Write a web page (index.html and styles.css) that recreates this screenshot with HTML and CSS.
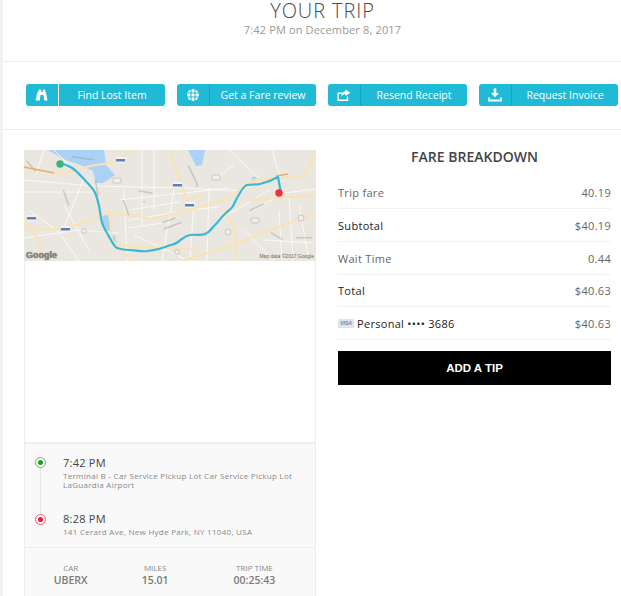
FILE: index.html
```html
<!DOCTYPE html>
<html lang="en">
<head>
<meta charset="utf-8">
<title>Your Trip</title>
<link rel="stylesheet" href="styles.css">
</head>
<body>
<div class="page">
  <header class="head">
    <h1 class="title">YOUR TRIP</h1>
    <p class="when">7:42 PM on December 8, 2017</p>
  </header>
  <nav class="actions">
    <a class="btn">
      <span class="btn-icon btn-icon-light"><svg width="14" height="14" viewBox="0 0 14 14"><path fill="#fff" d="M4 1.500h2l.4 2.500h1.200l.4-2.500h2l1.200 4.500 1.300 6.500H9.200l-.7-5.500h-3l-.7 5.500H.7L2 6z"/></svg></span>
      <span class="btn-label">Find Lost Item</span>
    </a>
    <a class="btn">
      <span class="btn-icon"><svg width="14" height="14" viewBox="0 0 14 14"><circle cx="7" cy="7" r="6" fill="#fff"/><path d="M0.500 5h13M0.500 9h13M5 0.500v13M9 0.500v13" stroke="#1fbad6" stroke-width="1.100"/></svg></span>
      <span class="btn-label">Get a Fare review</span>
    </a>
    <a class="btn">
      <span class="btn-icon"><svg width="14" height="14" viewBox="0 0 14 14"><path fill="none" stroke="#fff" stroke-width="1.500" d="M10.500 8.500v3.700H1.200V5.200h4"/><path fill="#fff" d="M8.500 1.500l5 3.200-5 3.300V6C6.500 6 5 7 4.200 9 4.200 5.800 6 3.500 8.500 3.300z"/></svg></span>
      <span class="btn-label">Resend Receipt</span>
    </a>
    <a class="btn">
      <span class="btn-icon"><svg width="14" height="14" viewBox="0 0 14 14"><path fill="#fff" d="M5.700 0.500h2.600v4.500h2.700L7 9.200 3 5h2.700z"/><path fill="none" stroke="#fff" stroke-width="1.800" d="M1 9.500v3h12v-3"/></svg></span>
      <span class="btn-label">Request Invoice</span>
    </a>
  </nav>
  <main class="content">
    <section class="card">
      <div class="map">
        <svg class="map-svg" width="292" height="111" viewBox="0 0 292 111">
          <defs>
            <filter id="soft" x="-5%" y="-5%" width="110%" height="110%"><feGaussianBlur stdDeviation="0.700"/></filter>
            <filter id="route" x="-5%" y="-5%" width="110%" height="110%"><feGaussianBlur stdDeviation="0.350"/></filter>
          </defs>
          <g filter="url(#soft)">
            <rect x="-5" y="-5" width="302" height="121" fill="#e9e7df"/>
            <g fill="#aad2f6">
              <path d="M24 0h56l2 15 9 10-12 8h-7l-3-12-15-7-10-3-8-4z"/>
              <path d="M164 0h17l-3 15-6 1z"/>
              <path d="M78 65l5-1 3 8 1 9-4-1-4-8z"/>
              <path d="M87 85l4 1 2 9-3 1z"/>
              <circle cx="230" cy="29" r="2.500"/><circle cx="120" cy="52" r="1"/><circle cx="173" cy="36" r="1"/>
            </g>
            <g fill="none" stroke="#fff" stroke-opacity="0.800" stroke-width="0.900">
              <path d="M0 30l70 6 90 2 60 3M0 42h70M5 60l30 22 20 29M30 0l14 14M60 28l-20 50M118 0v75M130 0v60M100 40l3 71M150 40l-12 71M185 38l-2 73M0 88l55-8 40 3M105 70l60-10 30-3M195 70l50-30M230 60l30-17 32-4M255 60l3 51M265 45l4 66M205 0l30 28M248 0l8 27M95 50l110-12M110 85l55 26M220 80l30 31M275 55l10 56M40 55l25 45M105 60l50-8M105 78l40-6M20 0l-8 25M170 50l-4 61M210 15l-20 15M240 90l50 3"/>
            </g>
            <g fill="none" stroke="#fbe2b4" stroke-width="2">
              <path d="M0 79l42 0 45-17 40 7 42-10 31-9 30-20 50-4 12-26"/>
              <path d="M0 18l36 6 30-8 26-4 14-12"/>
              <path d="M145 0l10 30 8 20 14-5"/>
              <path d="M200 60l10 17 3 34"/>
              <path d="M85 60l3 30 20 21"/>
              <path d="M0 70l14 20 6 21"/>
              <path d="M158 111l55-18 79-30"/>
              <path d="M88 95l90 5"/>
              <path d="M225 50l67-5"/>
            </g>
            <g fill="#9a9a92" opacity="0.420">
              <rect x="48" y="6" width="22" height="1.500" transform="rotate(8 48 6)"/>
              <rect x="72" y="30" width="16" height="1.500" transform="rotate(80 72 30)"/>
              <rect x="40" y="40" width="16" height="1.500" transform="rotate(70 40 40)"/>
              <rect x="115" y="40" width="14" height="1.500" transform="rotate(10 115 40)"/>
              <rect x="100" y="50" width="16" height="1.500" transform="rotate(70 100 50)"/>
              <rect x="140" y="78" width="18" height="1.500" transform="rotate(-20 140 78)"/>
              <rect x="138" y="72" width="14" height="1.500" transform="rotate(-20 138 72)"/>
              <rect x="225" y="60" width="16" height="1.500" transform="rotate(-25 225 60)"/>
              <rect x="272" y="87" width="16" height="1.500"/>
              <rect x="165" y="15" width="22" height="1.500" transform="rotate(65 165 15)"/>
              <rect x="247" y="82" width="14" height="1.500" transform="rotate(30 247 82)"/>
              <rect x="3" y="10" width="14" height="1.500" transform="rotate(50 3 10)"/>
            </g>
            <g fill="#efeee6" stroke="#a8a8a0" stroke-width="0.500">
              <rect x="89" y="28" width="8" height="5" rx="1"/>
              <rect x="188" y="25" width="8" height="5" rx="1"/>
              <rect x="227" y="68" width="8" height="5" rx="1"/>
              <circle cx="60" cy="81" r="2.500"/><circle cx="204" cy="82" r="3"/><circle cx="277" cy="68" r="3"/><circle cx="153" cy="102" r="2.500"/>
            </g>
            <g fill="#f4f4f4">
              <rect x="92" y="7" width="9" height="6" rx="1"/>
              <rect x="149" y="32" width="9" height="6" rx="1"/>
              <rect x="161" y="52" width="9" height="6" rx="1"/>
              <rect x="37" y="76" width="9" height="6" rx="1"/>
              <rect x="3" y="65" width="9" height="6" rx="1"/>
            </g>
            <g fill="#5b7fb5">
              <rect x="92" y="9" width="9" height="2.500"/>
              <rect x="149" y="34" width="9" height="2.500"/>
              <rect x="161" y="54" width="9" height="2.500"/>
              <rect x="37" y="78" width="9" height="2.500"/>
              <rect x="3" y="67" width="9" height="2.500"/>
            </g>
            <path fill="none" stroke="#e3b070" stroke-width="1.500" d="M0 17l30 6M252 26l12-2"/>
          </g>
          <g filter="url(#route)">
            <path fill="none" stroke="#3ab7d6" stroke-width="2.200" stroke-linejoin="round" stroke-linecap="round" d="M36 14C44 14 50 18 58 27S70 38 73 48 76 62 77 68 80 78 83 83 90 97 93 98 99 100 105 100 118 102 124 101 134 100 141 97 150 95 154 92 160 86 166 85 176 86 181 84 187 79 191 75 197 67 203 62 208 58 211 52 219 36 223 35 232 35 236 34 247 31 254 27L257 43"/>
            <circle cx="36" cy="14" r="3.700" fill="#38b37a"/>
            <circle cx="255" cy="43" r="3.700" fill="#ee3338"/>
          </g>
        </svg>
        <span class="map-logo">Google</span>
        <span class="map-credit">Map data ©2017 Google</span>
      </div>
      <div class="map-blank"></div>
      <div class="stops">
        <div class="stop stop-first">
          <span class="dot dot-green"></span>
          <div class="stop-text">
            <div class="stop-time">7:42 PM</div>
            <div class="stop-addr">Terminal B - Car Service Pickup Lot Car Service Pickup Lot LaGuardia Airport</div>
          </div>
        </div>
        <div class="stop stop-last">
          <span class="dot dot-red"></span>
          <div class="stop-text">
            <div class="stop-time">8:28 PM</div>
            <div class="stop-addr">141 Cerard Ave, New Hyde Park, NY 11040, USA</div>
          </div>
        </div>
      </div>
      <div class="stats">
        <div class="stat stat-car"><div class="stat-label">CAR</div><div class="stat-value">UBERX</div></div>
        <div class="stat stat-miles"><div class="stat-label">MILES</div><div class="stat-value">15.01</div></div>
        <div class="stat stat-time"><div class="stat-label">TRIP TIME</div><div class="stat-value">00:25:43</div></div>
      </div>
    </section>
    <section class="fare">
      <h2 class="fare-title">FARE BREAKDOWN</h2>
      <div class="row row-muted"><span>Trip fare</span><span class="amount">40.19</span></div>
      <div class="row"><span>Subtotal</span><span class="amount">$40.19</span></div>
      <div class="row row-muted"><span>Wait Time</span><span class="amount">0.44</span></div>
      <div class="row row-short"><span>Total</span><span class="amount">$40.63</span></div>
      <div class="row">
        <span class="pay"><span class="visa">VISA</span>Personal •••• 3686</span>
        <span class="amount">$40.63</span>
      </div>
      <a class="tip">ADD A TIP</a>
    </section>
  </main>
</div>
</body>
</html>
```
FILE: styles.css
```css
* { box-sizing: border-box; }
html, body { margin: 0; height: 596px; overflow: hidden; background: #fff; }
body { font-family: "Open Sans", "Noto Sans", sans-serif; color: #333; }
.page { border-left: 3px solid #f2f2f2; height: 596px; overflow: hidden; }
.head { height: 62px; border-bottom: 1px solid #ececec; padding-left: 21px; text-align: center; }
.title { margin: 0; font-size: 20px; line-height: 22px; font-weight: 300; color: #4a4a4a; letter-spacing: 0.9px; }
.when { margin: 0; font-size: 11px; line-height: 16px; color: #999; letter-spacing: 0.15px; }
.actions { display: flex; gap: 12px; height: 68px; padding: 22px 0 0 23px; border-bottom: 1px solid #ececec; }
.btn { display: flex; flex: none; width: 139px; height: 22px; border-radius: 3px; background: #1fbad6; color: #fff; font-size: 10.5px; line-height: 22px; }
.btn-icon { display: flex; align-items: center; justify-content: center; flex: none; width: 33px; height: 22px; border-right: 1px solid #19a5c0; }
.btn-icon-light { border-right-color: #fff; }
.btn-label { flex: 1; text-align: center; }
.content { display: flex; padding: 20px 0 0 21px; }
.card { flex: none; width: 292px; border-left: 1px solid #eee; border-right: 1px solid #eee; }
.map { position: relative; height: 111px; margin: 0 -1px; overflow: hidden; }
.map-svg { display: block; }
.map-logo { position: absolute; left: 2px; bottom: 0; font-family: "Liberation Sans", sans-serif; font-size: 9px; line-height: 11px; font-weight: 700; color: #8a8a8a; text-shadow: 0 0 1px #444; }
.map-credit { position: absolute; right: 2px; bottom: 1px; font-family: "Liberation Sans", sans-serif; font-size: 5px; line-height: 7px; color: #666; }
.map-blank { height: 183px; border-bottom: 2px solid #eee; }
.stops { height: 104px; padding: 11px 0 0 10px; background: #f9f9f9; border-bottom: 1px solid #eee; }
.stop { position: relative; display: flex; gap: 17px; }
.stop-first { height: 56px; }
.dot { position: relative; flex: none; width: 11px; height: 11px; margin-top: 2px; border-radius: 50%; background: #fff; z-index: 1; }
.stop-last .dot { margin-top: 3px; }
.dot::after { content: ""; position: absolute; left: 2px; top: 2px; width: 5px; height: 5px; border-radius: 50%; }
.dot-green { border: 1px solid #6cae6c; }
.dot-green::after { background: #1a9f1a; }
.dot-red { border: 1px solid #f4596a; }
.dot-red::after { background: #e91b2c; }
.stop-first::before { content: ""; position: absolute; left: 5px; top: 13px; width: 1px; height: 46px; background: #e4e4e4; }
.stop-text { min-width: 0; }
.stop-time { font-size: 11px; line-height: 15px; color: #444; letter-spacing: 0.25px; }
.stop-addr { font-size: 8px; line-height: 9px; margin-top: 1px; color: #888; letter-spacing: 0.28px; }
.stats { display: flex; height: 60px; background: #f9f9f9; padding-top: 14px; text-align: center; }
.stat-car { width: 92px; }
.stat-miles { width: 78px; }
.stat-time { width: 122px; }
.stat-label { font-size: 8px; line-height: 11px; color: #888; }
.stat-value { font-size: 10.5px; line-height: 15px; font-weight: 600; color: #7a7a7a; }
.fare { flex: none; width: 273px; margin-left: 22px; }
.fare-title { margin: -1px 0 0; height: 27px; font-size: 14px; line-height: 16px; font-weight: 600; color: #444; text-align: center; }
.row { display: flex; justify-content: space-between; align-items: center; height: 33px; border-bottom: 1px solid #f2f2f2; font-size: 11px; color: #222; letter-spacing: 0.3px; }
.row-short { height: 32px; }
.row-muted { color: #666; }
.amount { color: #666; }
.pay { display: flex; align-items: center; }
.visa { flex: none; width: 16px; height: 9px; margin-right: 3px; background: #dfe4ea; color: #6f86ab; font-family: "Liberation Sans", sans-serif; font-size: 5px; font-weight: 700; font-style: italic; line-height: 9px; letter-spacing: 0; text-align: center; }
.tip { display: block; height: 34px; margin-top: 11px; background: #000; color: #fff; font-family: "Liberation Sans", sans-serif; font-size: 11.5px; font-weight: 700; line-height: 34px; text-align: center; }
```
